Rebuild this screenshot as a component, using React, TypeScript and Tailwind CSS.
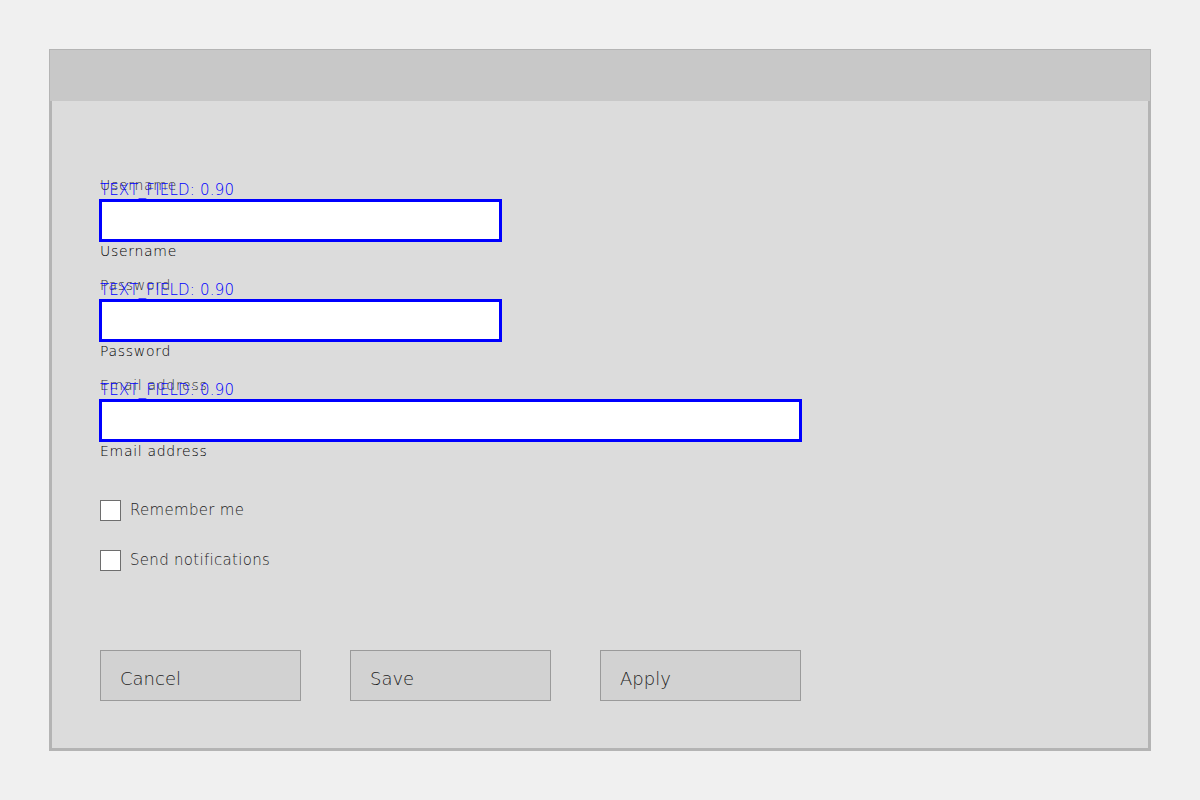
import React from 'react';

type Field = { label: string; wide?: boolean };

const fields: Field[] = [
  { label: 'Username' },
  { label: 'Password' },
  { label: 'Email address', wide: true },
];

const font = { fontFamily: '"DejaVu Sans", "Liberation Sans", sans-serif' };

function TextField({ label, wide }: Field) {
  return (
    <div className="relative mb-[20px]">
      {/* ghost label sitting under the detector annotation */}
      <div className="text-[14px] leading-[14px] text-[#2e2e2e] font-extralight tracking-[0.7px]">
        {label}
      </div>
      <div className="absolute left-0 top-[5px] text-[15px] leading-[15px] text-[#0000ff] font-extralight tracking-[0.2px] whitespace-nowrap">
        TEXT_FIELD: 0.90
      </div>
      <div
        className={`mt-[7px] -ml-px h-[43px] border-[3px] border-[#0000ff] bg-white ${
          wide ? 'w-[703px]' : 'w-[403px]'
        }`}
      />
      <div className="mt-[2px] text-[14px] leading-[14px] text-black font-extralight tracking-[0.7px]">
        {label}
      </div>
    </div>
  );
}

function Checkbox({ label }: { label: string }) {
  return (
    <div className="flex items-center gap-[9px] h-[21px]">
      <div className="w-[21px] h-[21px] border border-[#6e6e6e] bg-white shrink-0" />
      <span className="text-[15px] leading-[15px] text-[#1e1e1e] font-extralight tracking-[0.3px]">
        {label}
      </span>
    </div>
  );
}

function Button({ label }: { label: string }) {
  return (
    <div className="w-[201px] h-[51px] border border-[#9a9a9a] bg-[#d2d2d2] pl-[19px] pt-[19px]">
      <span className="block text-[18px] leading-[18px] text-[#1e1e1e] font-extralight">{label}</span>
    </div>
  );
}

export default function App() {
  return (
    <div className="min-h-[800px] w-[1200px] bg-[#f0f0f0] pt-[49px] pl-[49px]" style={font}>
      <div className="w-[1102px] h-[702px] border border-[#b4b4b4] flex flex-col">
        {/* Title bar */}
        <div className="h-[51px] bg-[#c8c8c8] shrink-0" />

        {/* Form body */}
        <div className="flex-1 flex flex-col items-start bg-[#dcdcdc] border-l-2 border-r-2 border-b-2 border-[#b4b4b4] pl-[48px] pt-[77px]">
          {fields.map((f) => (
            <TextField key={f.label} {...f} />
          ))}

          <div className="mt-[22px] flex flex-col gap-[29px]">
            <Checkbox label="Remember me" />
            <Checkbox label="Send notifications" />
          </div>

          <div className="mt-[79px] flex gap-[49px]">
            <Button label="Cancel" />
            <Button label="Save" />
            <Button label="Apply" />
          </div>
        </div>
      </div>
    </div>
  );
}
